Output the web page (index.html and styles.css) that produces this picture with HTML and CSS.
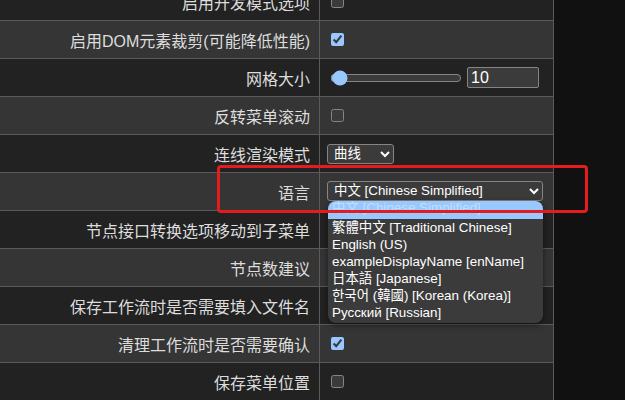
FILE: index.html
```html
<!DOCTYPE html>
<html lang="zh-CN">
<head>
  <meta charset="UTF-8">
  <meta name="viewport" content="width=device-width, initial-scale=1.0">
  <title>设置</title>
  <link rel="stylesheet" href="styles.css">
</head>
<body>
  <div class="settings">
    <div class="row dark">
      <div class="label">启用开发模式选项</div>
      <div class="control"><input type="checkbox"></div>
    </div>
    <div class="row light">
      <div class="label">启用DOM元素裁剪(可能降低性能)</div>
      <div class="control"><input type="checkbox" checked></div>
    </div>
    <div class="row dark">
      <div class="label">网格大小</div>
      <div class="control">
        <input type="range" class="slider" min="0" max="500" value="10">
        <input type="number" class="num" value="10">
      </div>
    </div>
    <div class="row light">
      <div class="label">反转菜单滚动</div>
      <div class="control"><input type="checkbox"></div>
    </div>
    <div class="row dark">
      <div class="label">连线渲染模式</div>
      <div class="control">
        <select class="select small">
          <option>曲线</option>
        </select>
      </div>
    </div>
    <div class="row light">
      <div class="label">语言</div>
      <div class="control">
        <div class="select-wrap">
          <select class="select lang">
            <option>中文 [Chinese Simplified]</option>
          </select>
          <!-- 打开的下拉列表 -->
          <div class="dropdown">
            <div class="option active">中文 [Chinese Simplified]</div>
            <div class="option">繁體中文 [Traditional Chinese]</div>
            <div class="option">English (US)</div>
            <div class="option">exampleDisplayName [enName]</div>
            <div class="option">日本語 [Japanese]</div>
            <div class="option">한국어 (韓國) [Korean (Korea)]</div>
            <div class="option">Русский [Russian]</div>
          </div>
        </div>
      </div>
    </div>
    <div class="row dark">
      <div class="label">节点接口转换选项移动到子菜单</div>
      <div class="control"><input type="checkbox"></div>
    </div>
    <div class="row light">
      <div class="label">节点数建议</div>
      <div class="control"><input type="checkbox"></div>
    </div>
    <div class="row dark">
      <div class="label">保存工作流时是否需要填入文件名</div>
      <div class="control"><input type="checkbox" checked></div>
    </div>
    <div class="row light">
      <div class="label">清理工作流时是否需要确认</div>
      <div class="control"><input type="checkbox" checked></div>
    </div>
    <div class="row dark">
      <div class="label">保存菜单位置</div>
      <div class="control"><input type="checkbox"></div>
    </div>
  </div>

  <div class="highlight-box"></div>
</body>
</html>
```

FILE: styles.css
```css
html {
  color-scheme: dark;
}

body {
  margin: 0;
  padding: 0;
  background-color: #111;
  color: #ddd;
  font-family: "Liberation Sans", "Noto Sans CJK SC", "Noto Sans CJK KR", sans-serif;
  overflow: hidden;
}

.settings {
  width: 553px;
  margin-top: -17px;
  border-right: 1px solid #5a5a5a;
}

.row {
  display: grid;
  grid-template-columns: 320px 1fr;
  height: 37px;
  border-bottom: 1px solid #5a5a5a;
}

.row.dark {
  background-color: #222;
}

.row.light {
  background-color: #353535;
}

.label {
  display: flex;
  align-items: center;
  justify-content: flex-end;
  padding-right: 9px;
  font-size: 16px;
  border-right: 1px solid #5a5a5a;
  white-space: nowrap;
}

.control {
  display: flex;
  align-items: center;
  padding-left: 7px;
}

.control input[type="checkbox"] {
  width: 13px;
  height: 13px;
  margin: 0 0 0 4px;
}

.slider {
  width: 132px;
  margin: 0 5px 0 3px;
}

.num {
  box-sizing: border-box;
  width: 72px;
  height: 21px;
  padding: 1px 3px;
  font-family: "Liberation Sans", sans-serif;
  font-size: 16px;
  color: #fff;
  background-color: #3b3b3b;
  border: 1px solid #858585;
  border-radius: 2px;
}

.select {
  box-sizing: border-box;
  height: 20px;
  font-family: "Liberation Sans", "Noto Sans CJK SC", sans-serif;
  font-size: 13.4px;
  color: #fff;
  background-color: #3b3b3b;
  border: 1px solid #858585;
  border-radius: 3px;
  padding: 0 2px;
}

.select.small {
  width: 67px;
}

.select.lang {
  width: 216px;
}

.select-wrap {
  position: relative;
  margin-top: -2px;
}

.dropdown {
  position: absolute;
  top: 20px;
  left: 1px;
  z-index: 5;
  width: 215px;
  padding-bottom: 2px;
  background-color: #3b3b3b;
  border-radius: 8px;
  box-shadow: 0 2px 6px rgba(0, 0, 0, 0.5);
  overflow: hidden;
  font-size: 13.4px;
  color: #fff;
}

.option {
  height: 17px;
  line-height: 17px;
  padding-left: 4px;
  white-space: nowrap;
}

.option.active {
  height: 18px;
  line-height: 14px;
  background-color: #99c8ff;
  color: #c2deff;
}

.highlight-box {
  position: absolute;
  left: 217px;
  top: 165px;
  width: 365px;
  height: 42px;
  border: 3px solid #e51c1c;
  border-radius: 4px;
  z-index: 10;
}
```
